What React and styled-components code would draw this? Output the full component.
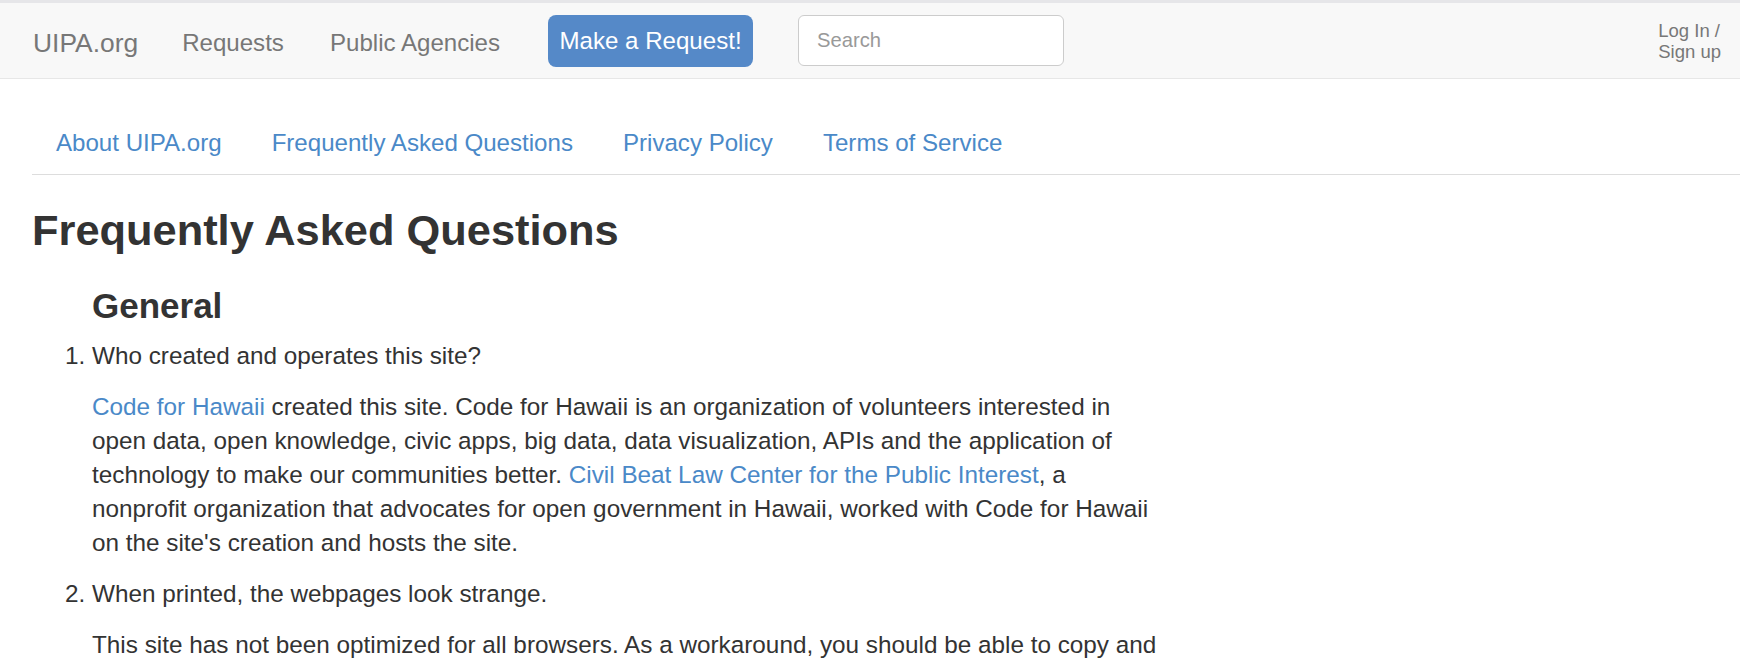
import React from "react";
import styled, { createGlobalStyle } from "styled-components";

const GlobalStyle = createGlobalStyle`
  html, body {
    margin: 0;
    padding: 0;
    background: #fff;
  }
  body {
    font-family: "Liberation Sans", Helvetica, Arial, sans-serif;
    font-size: 24.3px;
    line-height: 34px;
    color: #333;
  }
  * {
    box-sizing: border-box;
  }
`;

const Navbar = styled.nav`
  height: 79px;
  background: #f8f8f8;
  border-top: 3px solid #e6e6e9;
  border-bottom: 1px solid #e7e7e7;
  display: flex;
  align-items: center;
  padding: 0 19px 0 33px;
`;

const Brand = styled.a`
  font-size: 26.4px;
  color: #777;
  text-decoration: none;
  margin: 4px 44px 0 0;
`;

const NavLink = styled.a`
  font-size: 24.1px;
  color: #777;
  text-decoration: none;
  margin: 4px ${(p) => (p.$last ? 48 : 46)}px 0 0;
`;

const RequestButton = styled.a`
  display: flex;
  align-items: center;
  justify-content: center;
  width: 205px;
  height: 52px;
  border-radius: 8px;
  background: #5589c8;
  color: #fff;
  font-size: 24.1px;
  text-decoration: none;
  margin-right: 45px;
`;

const SearchInput = styled.input`
  width: 266px;
  height: 51px;
  border: 1px solid #ccc;
  border-radius: 6px;
  background: #fff;
  padding: 0 18px;
  font-family: inherit;
  font-size: 20.2px;
  color: #555;
  outline: none;

  &::placeholder {
    color: #999;
  }
`;

const LoginLink = styled.a`
  margin-left: auto;
  font-size: 18.5px;
  line-height: 20.5px;
  color: #777;
  text-decoration: none;
  margin-top: 2px;
`;

const Page = styled.div`
  padding: 0 0 0 32px;
`;

const Tabs = styled.ul`
  list-style: none;
  margin: 27px 0 0;
  padding: 0;
  display: flex;
  border-bottom: 1px solid #ddd;
`;

const TabLink = styled.a`
  display: block;
  padding: 20px 24px 14px;
  margin-right: 2px;
  font-size: 24.1px;
  color: #4a89c8;
  text-decoration: none;
`;

const Title = styled.h1`
  font-size: 43.4px;
  line-height: 47px;
  font-weight: bold;
  margin: 32px 0 0;
  color: #333;
`;

const Section = styled.section`
  padding-left: 60px;
  width: 1133px;
`;

const SectionTitle = styled.h2`
  font-size: 35px;
  line-height: 38.5px;
  font-weight: bold;
  margin: 33px 0 13px;
  color: #333;
`;

const Questions = styled.ol`
  margin: 0;
  padding: 0;
  list-style-position: outside;
`;

const Question = styled.li`
  margin: 0;
`;

const Ask = styled.p`
  margin: 0 0 17px;
`;

const Answer = styled.p`
  margin: 0 0 17px;
`;

const Link = styled.a`
  color: #4a89c8;
  text-decoration: none;
`;

const faq = [
  {
    q: "Who created and operates this site?",
    a: (
      <>
        <Link href="#">Code for Hawaii</Link> created this site. Code for Hawaii is an
        organization of volunteers interested in open data, open knowledge, civic apps, big
        data, data visualization, APIs and the application of technology to make our
        communities better.{" "}
        <Link href="#">Civil Beat Law Center for the Public Interest</Link>, a nonprofit
        organization that advocates for open government in Hawaii, worked with Code for
        Hawaii on the site's creation and hosts the site.
      </>
    ),
  },
  {
    q: "When printed, the webpages look strange.",
    a: (
      <>
        This site has not been optimized for all browsers. As a workaround, you should be
        able to copy and paste relevant text into a document for printing. If you are
        looking for copies of documents related to a request, you can download them from
        the request page.
      </>
    ),
  },
];

const App = () => {
  return (
    <>
      <GlobalStyle />
      <Navbar>
        <Brand href="#">UIPA.org</Brand>
        <NavLink href="#">Requests</NavLink>
        <NavLink href="#" $last>
          Public Agencies
        </NavLink>
        <RequestButton href="#">Make a Request!</RequestButton>
        <SearchInput type="text" placeholder="Search" />
        <LoginLink href="#">
          Log In /
          <br />
          Sign up
        </LoginLink>
      </Navbar>
      <Page>
        <Tabs>
          <li>
            <TabLink href="#">About UIPA.org</TabLink>
          </li>
          <li>
            <TabLink href="#">Frequently Asked Questions</TabLink>
          </li>
          <li>
            <TabLink href="#">Privacy Policy</TabLink>
          </li>
          <li>
            <TabLink href="#">Terms of Service</TabLink>
          </li>
        </Tabs>
        <Title>Frequently Asked Questions</Title>
        <Section>
          <SectionTitle>General</SectionTitle>
          <Questions>
            {faq.map((item, index) => (
              <Question key={index}>
                <Ask>{item.q}</Ask>
                <Answer>{item.a}</Answer>
              </Question>
            ))}
          </Questions>
        </Section>
      </Page>
    </>
  );
};

export default App;
